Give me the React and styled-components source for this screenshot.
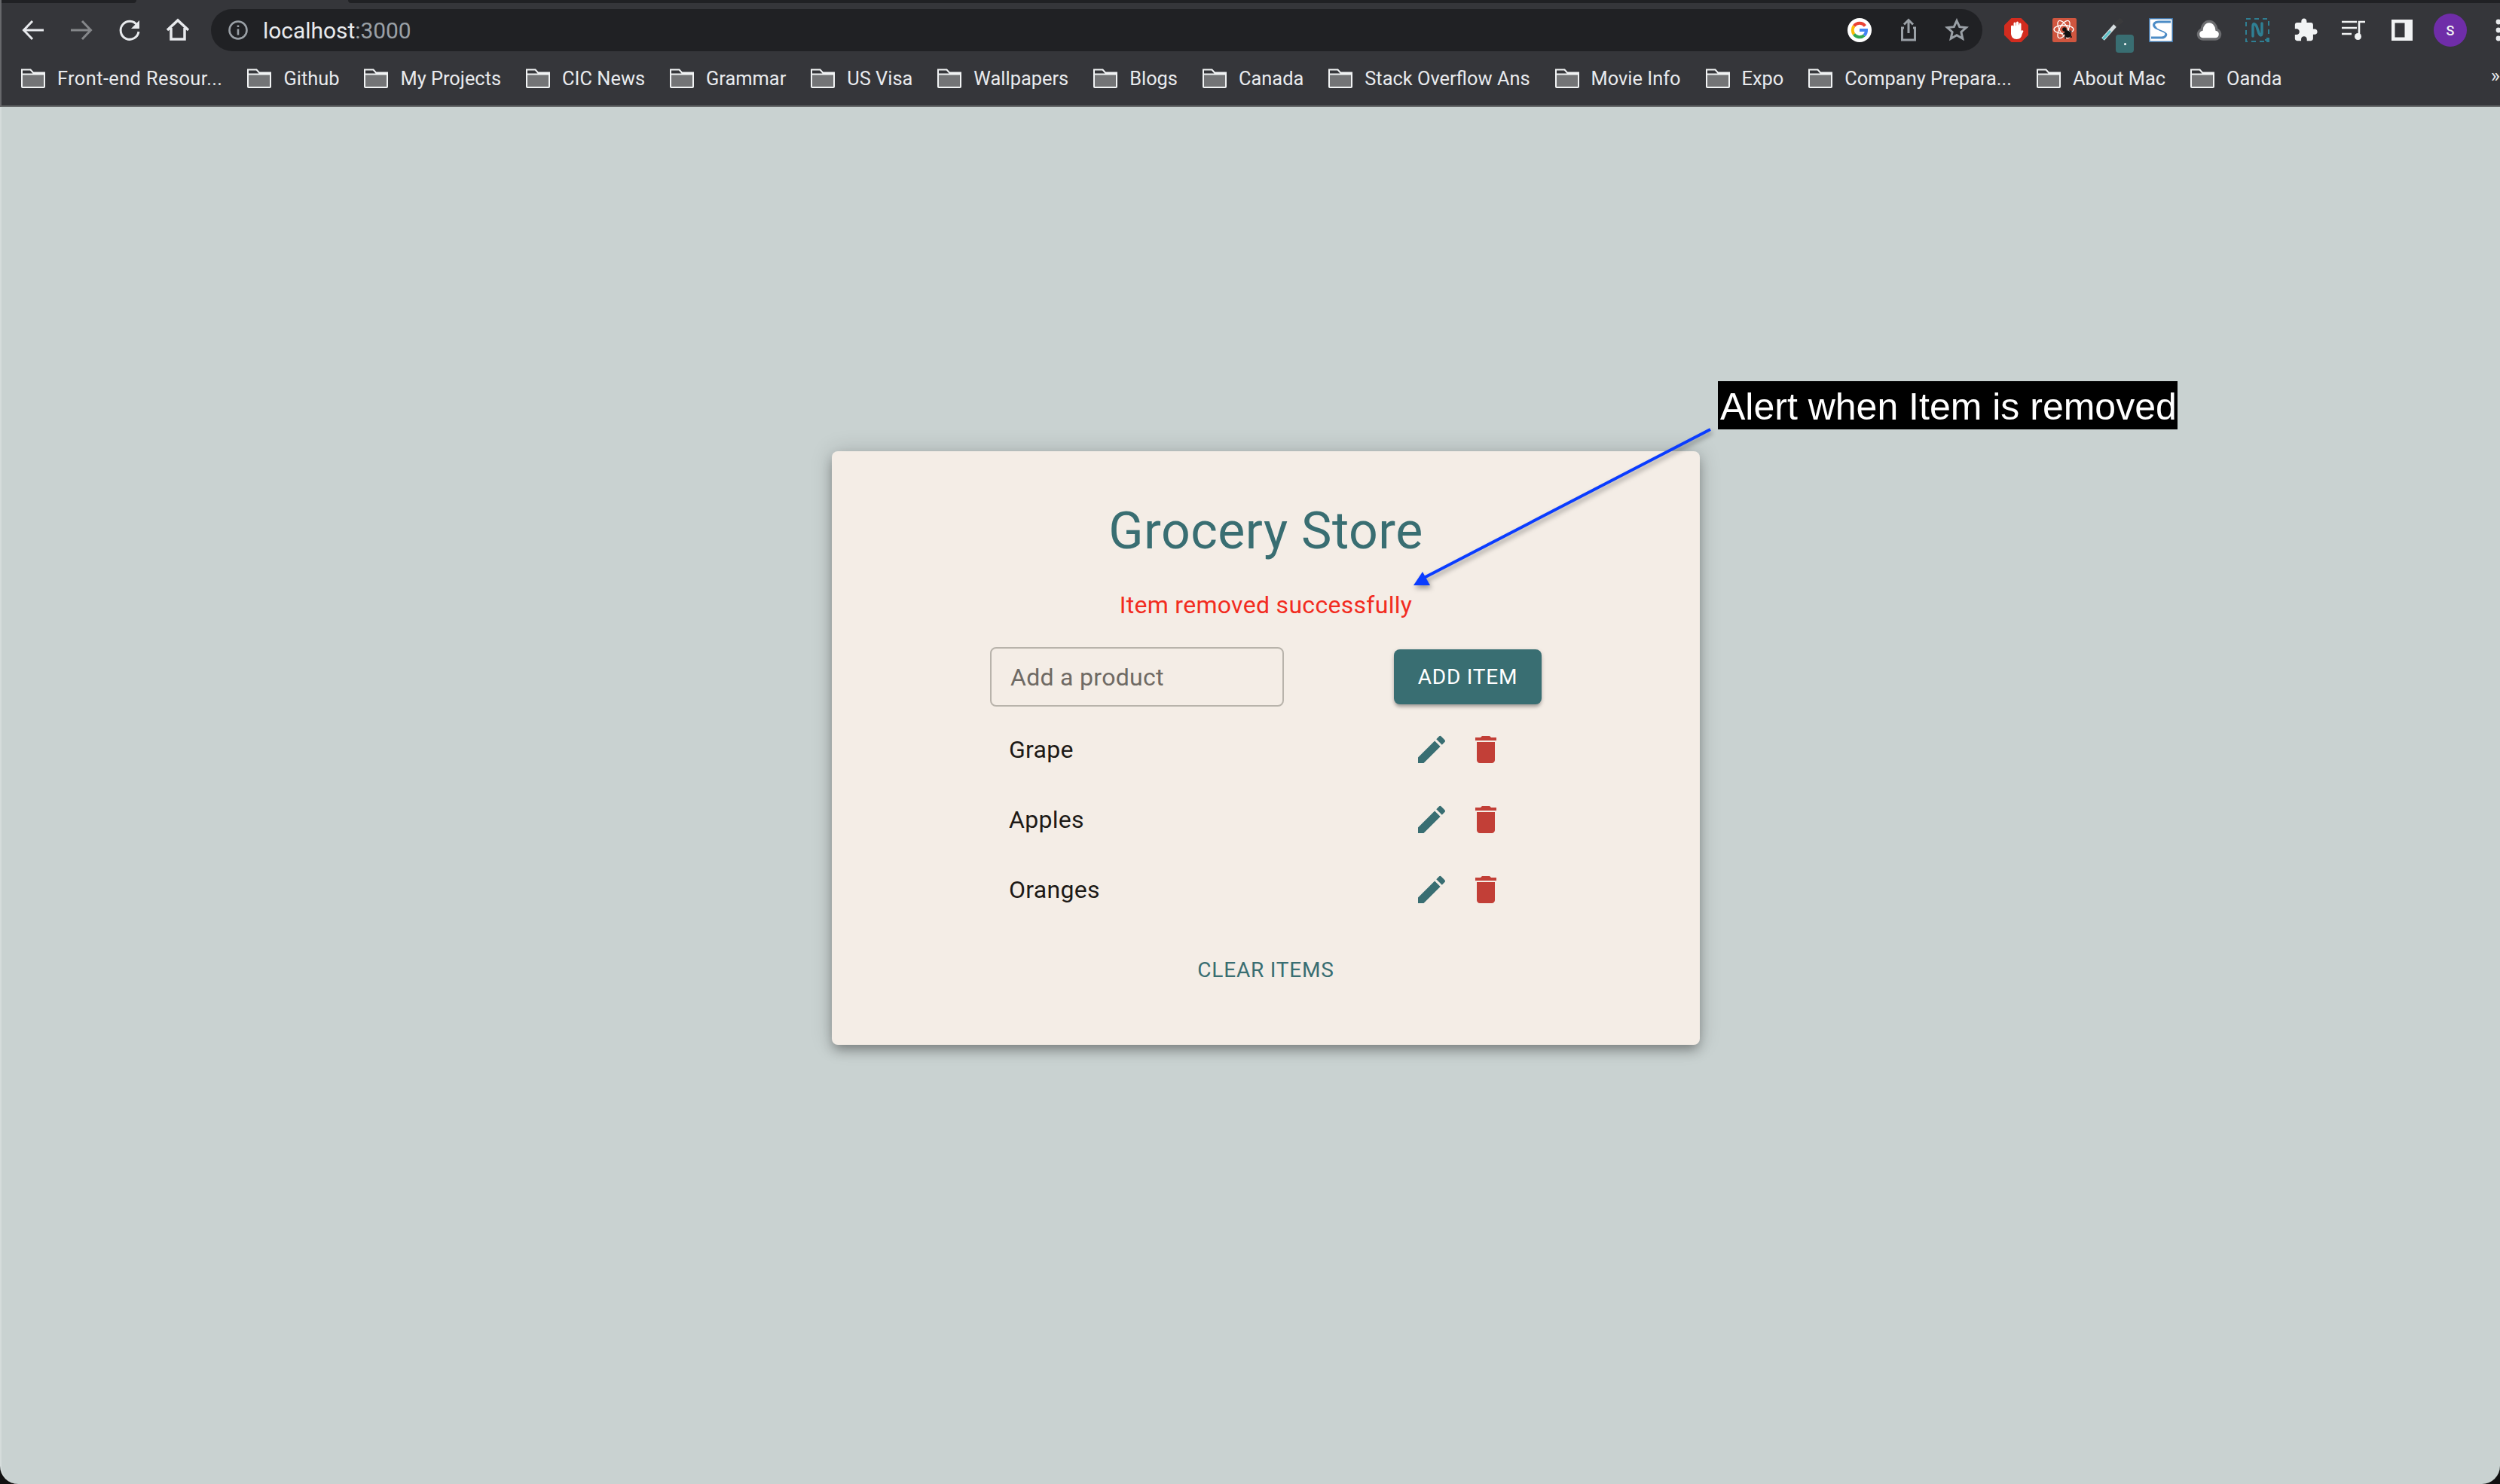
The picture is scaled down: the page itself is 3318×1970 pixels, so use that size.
import React from 'react';
import styled, { createGlobalStyle } from 'styled-components';

const GlobalStyle = createGlobalStyle`
  html, body {
    margin: 0;
    padding: 0;
    background: #111;
  }
  * {
    box-sizing: border-box;
  }
`;

const Frame = styled.div`
  position: relative;
  width: 3318px;
  height: 1970px;
  overflow: hidden;
  display: flex;
  flex-direction: column;
  font-family: Roboto, "Liberation Sans", sans-serif;
`;

/* browser chrome */
const Chrome = styled.header`
  flex: none;
  background: #35363a;
  border-left: 2px solid #67686b;
  border-bottom: 2px solid #66696a;
`;
const TabStrip = styled.div`
  display: flex;
  height: 4px;
`;
const TabGap = styled.div`
  height: 4px;
  background: #202124;
  border-bottom-left-radius: ${p => (p.$right ? '4px' : '0')};
  border-bottom-right-radius: ${p => (p.$right ? '0' : '4px')};
  width: ${p => (p.$right ? 'auto' : '179px')};
  flex: ${p => (p.$right ? '1' : 'none')};
  margin-left: ${p => (p.$right ? '281px' : '0')};
`;
const Toolbar = styled.div`
  display: flex;
  align-items: center;
  height: 72px;
  padding-left: 26px;
  gap: 32px;
  overflow: hidden;
`;
const Slot = styled.div`
  flex: none;
  width: 32px;
  height: 32px;
  position: relative;
  display: flex;
  align-items: center;
  justify-content: center;
  svg { display: block; overflow: visible; }
`;
const Omnibox = styled.div`
  flex: none;
  width: 2351px;
  height: 56px;
  margin-left: -4px;
  margin-right: -3px;
  border-radius: 28px;
  background: #202124;
  display: flex;
  align-items: center;
  padding: 0 18px 0 23px;
`;
const Url = styled.div`
  margin-left: 20px;
  font-size: 29.9px;
  color: #e8eaed;
  flex: 1;
  span { color: #9aa0a6; }
`;
const OmniActions = styled.div`
  display: flex;
  align-items: center;
  gap: 32.5px;
`;
const Badge = styled.div`
  position: absolute;
  left: 20px;
  top: 22px;
  width: 24px;
  height: 24px;
  border-radius: 4px;
  background: #396e72;
  display: flex;
  align-items: center;
  justify-content: center;
  &::after {
    content: '';
    width: 3px;
    height: 3px;
    background: #fff;
    border-radius: 50%;
  }
`;
const Avatar = styled.div`
  flex: none;
  width: 44px;
  height: 44px;
  margin: 0 -6px;
  border-radius: 50%;
  background: #6f2da8;
  color: #f1f3f4;
  font-size: 18px;
  font-weight: 500;
  display: flex;
  align-items: center;
  justify-content: center;
`;
const BookmarkBar = styled.nav`
  display: flex;
  align-items: center;
  height: 64px;
  padding: 0 0 8px 26px;
  gap: 33px;
  position: relative;
`;
const Bookmark = styled.div`
  flex: none;
  display: flex;
  align-items: center;
  gap: 16px;
  font-size: 25.4px;
  color: #e8eaed;
  white-space: nowrap;
  &:first-child {
    letter-spacing: 0.4px;
  }
`;
const Overflow = styled.div`
  position: absolute;
  right: 0;
  top: 9px;
  font-size: 26px;
  color: #e8eaed;
`;

/* page */
const Page = styled.main`
  flex: 1;
  background: #c9d2d1;
  border-left: 2px solid #d5dcdb;
  border-radius: 0 0 24px 24px;
  padding: 457px 0 0 1102px;
`;
const Card = styled.section`
  width: 1152px;
  height: 788px;
  padding-top: 66px;
  background: #f4ede6;
  border-radius: 8px;
  box-shadow: 0 8px 16px -2px rgba(0, 0, 0, 0.35), 0 0 30px rgba(0, 0, 0, 0.16);
  display: flex;
  flex-direction: column;
  align-items: center;
`;
const Title = styled.h1`
  margin: 0 0 34px;
  font-size: 68px;
  line-height: 80px;
  font-weight: 400;
  letter-spacing: 0.5px;
  color: #396e72;
`;
const Alert = styled.p`
  margin: 0 0 32px;
  font-size: 32px;
  line-height: 48px;
  letter-spacing: 0.3px;
  color: #f22c1f;
`;
const Form = styled.form`
  width: 732px;
  display: flex;
  align-items: center;
  justify-content: space-between;
  margin-bottom: 10px;
`;
const Input = styled.input`
  width: 390px;
  height: 79px;
  padding: 0 25px;
  background: transparent;
  border: 2.5px solid #b8b3ab;
  border-radius: 8px;
  outline: none;
  font-family: inherit;
  font-size: 32px;
  letter-spacing: 0.3px;
  color: #1d1a17;
  &::placeholder {
    color: #6f6a64;
    opacity: 1;
  }
`;
const AddButton = styled.button`
  width: 196px;
  height: 73px;
  border: none;
  border-radius: 8px;
  background: #396e72;
  color: #fff;
  font-family: inherit;
  font-size: 28px;
  font-weight: 400;
  letter-spacing: 0.8px;
  box-shadow: 0 4px 4px -1px rgba(0, 0, 0, 0.25), 0 2px 6px rgba(0, 0, 0, 0.15);
`;
const List = styled.ul`
  width: 730px;
  margin: 0 0 24px;
  padding: 0;
  list-style: none;
`;
const Row = styled.li`
  height: 93px;
  padding: 0 49px 0 24px;
  display: flex;
  align-items: center;
  justify-content: space-between;
  font-size: 32px;
  letter-spacing: 0.3px;
  color: #1d1a17;
`;
const RowActions = styled.div`
  display: flex;
  gap: 24px;
`;
const ClearButton = styled.button`
  height: 72px;
  border: none;
  background: transparent;
  color: #396e72;
  font-family: inherit;
  font-size: 28px;
  letter-spacing: 0.8px;
`;

/* annotation drawn over the screenshot */
const Callout = styled.div`
  position: absolute;
  left: 2280px;
  top: 506px;
  width: 610px;
  height: 64px;
  background: #000;
  color: #fff;
  font-family: "Liberation Sans", Arial, sans-serif;
  font-size: 50px;
  line-height: 68px;
  padding-left: 3px;
  white-space: nowrap;
`;
const ArrowSvg = styled.svg`
  position: absolute;
  left: 1860px;
  top: 560px;
  overflow: visible;
  filter: drop-shadow(2px 4px 3px rgba(0, 0, 0, 0.35));
`;

const Stroke = ({ children, color = '#e8eaed', w = 3 }) => (
  <svg width="32" height="32" viewBox="0 0 32 32" fill="none" stroke={color} strokeWidth={w}>{children}</svg>
);

const Folder = () => (
  <svg width="32" height="26" viewBox="0 0 32 26">
    <path d="M2 8h28v16H2z" fill="#737476" />
    <path d="M1 24V1.5h11.5L16 5.5h15V24a1 1 0 0 1-1 1H2a1 1 0 0 1-1-1zM1 7.5h30" fill="none" stroke="#f1f3f4" strokeWidth="2" />
  </svg>
);

const GoogleIcon = () => (
  <svg width="32" height="32" viewBox="0 0 32 32" fill="none">
    <circle cx="16" cy="16" r="16" fill="#fff" />
    <path d="M23.4 10.4A9.4 9.4 0 0 0 8.6 10.5" stroke="#ea4335" strokeWidth="4" />
    <path d="M8.6 10.5a9.4 9.4 0 0 0 0 11" stroke="#fbbc05" strokeWidth="4" />
    <path d="M8.6 21.5a9.4 9.4 0 0 0 13.6 1.5" stroke="#34a853" strokeWidth="4" />
    <path d="M16 16h9a9.4 9.4 0 0 1-2.8 7" stroke="#4285f4" strokeWidth="4" />
  </svg>
);

const AdBlockIcon = () => (
  <svg width="32" height="32" viewBox="0 0 32 32">
    <polygon points="9.5,0 22.5,0 32,9.5 32,22.5 22.5,32 9.5,32 0,22.5 0,9.5" fill="#d32c1f" />
    <path d="M9 11v9c0 5 3 8 7.5 8s6.5-3 7-6l2-5-2-1-2.5 3V9" fill="#fff" />
    <path d="M10.5 11v9M14 7v11M17.5 6v12M21 8v10" stroke="#fff" strokeWidth="3" strokeLinecap="round" />
  </svg>
);

const ReactDevIcon = () => (
  <svg width="32" height="32" viewBox="0 0 32 32" fill="none">
    <rect width="32" height="32" rx="2" fill="#d0563f" />
    <g stroke="#fff" strokeWidth="1.3">
      <ellipse cx="15" cy="15" rx="13" ry="5.5" />
      <ellipse cx="15" cy="15" rx="13" ry="5.5" transform="rotate(60 15 15)" />
      <ellipse cx="15" cy="15" rx="13" ry="5.5" transform="rotate(120 15 15)" />
    </g>
    <circle cx="16" cy="15" r="2.8" fill="#111" />
    <ellipse cx="20" cy="21" rx="4" ry="5" fill="#111" transform="rotate(-30 20 21)" />
    <path d="M14 21l12-3M15 25l11 0M18 16l-1 12M23 16l2 10" stroke="#111" strokeWidth="1.2" />
  </svg>
);

const DropperIcon = () => (
  <svg width="32" height="32" viewBox="0 0 32 32" fill="none">
    <path d="M3 28L20 9" stroke="#d7dee0" strokeWidth="5" />
    <path d="M3 28L13 17" stroke="#5cc0c7" strokeWidth="3" />
    <path d="M19 10l9-8" stroke="#3a3a3c" strokeWidth="7" />
  </svg>
);

const SIcon = () => (
  <svg width="32" height="32" viewBox="0 0 32 32" fill="none">
    <rect width="32" height="32" fill="#3f74a8" />
    <rect x="1.5" y="1.5" width="29" height="29" fill="#fff" />
    <path d="M29 5H13C7 5 5 9 8 12c3 3 11 4 14 7 2 3 0 7-5 7H3" stroke="#4d8cc6" strokeWidth="3" />
    <path d="M28 9H15c-4 0-4 3-2 4 4 2 11 3 13 8" stroke="#fff" strokeWidth="3" />
  </svg>
);

const CloudIcon = () => (
  <svg width="32" height="26" viewBox="0 0 32 26">
    <path d="M8 25a6.5 6.5 0 0 1-2-12.7C6.8 5.5 11 1.5 16 1.5s9.2 4 10 10.8A6.5 6.5 0 0 1 24 25z" fill="#fff" stroke="#6c6d70" strokeWidth="3.5" />
  </svg>
);

const NimbusIcon = () => (
  <svg width="32" height="32" viewBox="0 0 32 32" fill="none">
    <rect x="1" y="1" width="30" height="30" stroke="#2f7f93" strokeWidth="2" strokeDasharray="6 5" />
    <path d="M10 24V11c0-5 3-4 5 0l3 9c2 4 4 4 4-1V7" stroke="#2f7f93" strokeWidth="3.5" strokeLinecap="round" />
    <path d="M26 29h6M29 26v6" stroke="#2f7f93" strokeWidth="2" />
  </svg>
);

const PencilIcon = () => (
  <svg width="48" height="48" viewBox="0 0 24 24" fill="#396e72">
    <path d="M3 17.25V21h3.75L17.81 9.94l-3.75-3.75L3 17.25zM20.71 7.04c.39-.39.39-1.02 0-1.41l-2.34-2.34a.9959.9959 0 00-1.41 0l-1.83 1.83 3.75 3.75 1.83-1.83z" />
  </svg>
);

const TrashIcon = () => (
  <svg width="48" height="48" viewBox="0 0 24 24" fill="#c23f37">
    <path d="M6 19c0 1.1.9 2 2 2h8c1.1 0 2-.9 2-2V7H6v12zM19 4h-3.5l-1-1h-5l-1 1H5v2h14V4z" />
  </svg>
);

const bookmarks = [
  'Front-end Resour...', 'Github', 'My Projects', 'CIC News', 'Grammar', 'US Visa', 'Wallpapers', 'Blogs',
  'Canada', 'Stack Overflow Ans', 'Movie Info', 'Expo', 'Company Prepara...', 'About Mac', 'Oanda',
];

const items = ['Grape', 'Apples', 'Oranges'];

export default function App() {
  return (
    <Frame>
      <GlobalStyle />
      <Chrome>
        <TabStrip>
          <TabGap />
          <TabGap $right />
        </TabStrip>
        <Toolbar>
          <Slot>
            <Stroke><path d="M30 16H5M15 4L3.5 16 15 28" /></Stroke>
          </Slot>
          <Slot>
            <Stroke color="#85878a"><path d="M2 16h25M17 4l11.5 12L17 28" /></Stroke>
          </Slot>
          <Slot>
            <Stroke><path d="M26 9.5A12 12 0 1 0 28 18" /><path d="M29 3v11H18z" fill="#e8eaed" stroke="none" /></Stroke>
          </Slot>
          <Slot>
            <Stroke w={3.5}><path d="M2 16L16 3l14 13M7 13v15h18V13" /></Stroke>
          </Slot>
          <Omnibox>
            <svg width="26" height="26" viewBox="0 0 26 26" fill="none" stroke="#9aa0a6" strokeWidth="2.6">
              <circle cx="13" cy="13" r="11.5" />
              <path d="M13 11.5v8M13 6.5v2.6" />
            </svg>
            <Url>localhost<span>:3000</span></Url>
            <OmniActions>
              <GoogleIcon />
              <Stroke color="#9aa0a6"><path d="M10 13H7.5v16h17V13H22M16 20V3M10 8.5L16 2.5l6 6" /></Stroke>
              <Stroke color="#9aa0a6"><path d="M16 3.5l3.7 8.2 8.8.9-6.6 5.9 1.9 8.7-7.8-4.5-7.8 4.5 1.9-8.7-6.6-5.9 8.8-.9z" /></Stroke>
            </OmniActions>
          </Omnibox>
          <Slot><AdBlockIcon /></Slot>
          <Slot><ReactDevIcon /></Slot>
          <Slot><DropperIcon /><Badge /></Slot>
          <Slot><SIcon /></Slot>
          <Slot><CloudIcon /></Slot>
          <Slot><NimbusIcon /></Slot>
          <Slot>
            <svg width="34" height="34" viewBox="0 0 24 24" fill="#f1f3f4">
              <path d="M20.5 11H19V7c0-1.1-.9-2-2-2h-4V3.5C13 2.12 11.88 1 10.5 1S8 2.12 8 3.5V5H4c-1.1 0-1.99.9-1.99 2v3.8H3.5c1.49 0 2.7 1.21 2.7 2.7s-1.21 2.7-2.7 2.7H2V20c0 1.1.9 2 2 2h3.8v-1.5c0-1.49 1.21-2.7 2.7-2.7 1.49 0 2.7 1.21 2.7 2.7V22H17c1.1 0 2-.9 2-2v-4h1.5c1.38 0 2.5-1.12 2.5-2.5S21.88 11 20.5 11z" />
            </svg>
          </Slot>
          <Slot>
            <svg width="32" height="26" viewBox="0 0 32 26" fill="none" stroke="#f1f3f4" strokeWidth="2.6">
              <path d="M0 2h20M0 10h20M0 18h13M23 21V2h8" />
              <circle cx="21.5" cy="21.5" r="4.5" fill="#f1f3f4" stroke="none" />
            </svg>
          </Slot>
          <Slot>
            <svg width="28" height="28" viewBox="0 0 28 28">
              <path d="M0 0h28v28H0zM4.5 4.5v19h13v-19z" fill="#f1f3f4" fillRule="evenodd" />
            </svg>
          </Slot>
          <Avatar>S</Avatar>
          <Slot>
            <svg width="8" height="30" viewBox="0 0 8 30" fill="#e8eaed">
              <circle cx="4" cy="4" r="3.4" />
              <circle cx="4" cy="15" r="3.4" />
              <circle cx="4" cy="26" r="3.4" />
            </svg>
          </Slot>
        </Toolbar>
        <BookmarkBar>
          {bookmarks.map(name => (
            <Bookmark key={name}>
              <Folder />
              {name}
            </Bookmark>
          ))}
          <Overflow>»</Overflow>
        </BookmarkBar>
      </Chrome>

      <Page>
        <Card>
          <Title>Grocery Store</Title>
          <Alert>Item removed successfully</Alert>
          <Form>
            <Input placeholder="Add a product" />
            <AddButton type="button">ADD ITEM</AddButton>
          </Form>
          <List>
            {items.map(item => (
              <Row key={item}>
                {item}
                <RowActions>
                  <PencilIcon />
                  <TrashIcon />
                </RowActions>
              </Row>
            ))}
          </List>
          <ClearButton type="button">CLEAR ITEMS</ClearButton>
        </Card>
      </Page>

      <Callout>Alert when Item is removed</Callout>
      <ArrowSvg width="420" height="230" viewBox="0 0 420 230">
        <path d="M410 10L26 209" stroke="#0a3cff" strokeWidth="4" />
        <path d="M28 199L16 217h22z" fill="#0a3cff" />
      </ArrowSvg>
    </Frame>
  );
}
